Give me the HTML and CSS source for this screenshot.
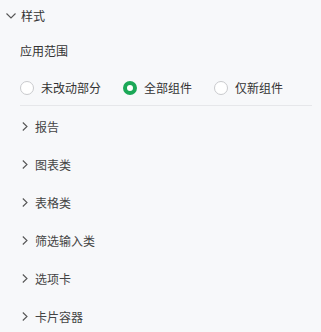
FILE: index.html
```html
<!DOCTYPE html>
<html lang="zh">
<head>
<meta charset="utf-8">
<link rel="stylesheet" href="styles.css">
</head>
<body>
<div class="panel">
  <div class="header">
    <svg class="chev-down" width="10" height="6" viewBox="0 0 10 6"><path d="M0.5 0.5 L5 5 L9.5 0.5" fill="none" stroke="#555" stroke-width="1.1"/></svg>
    <span class="header-text">样式</span>
  </div>
  <div class="body">
    <div class="label">应用范围</div>
    <div class="radios">
      <label class="radio"><span class="dot"></span><span class="rtext">未改动部分</span></label>
      <label class="radio checked"><span class="dot"></span><span class="rtext">全部组件</span></label>
      <label class="radio"><span class="dot"></span><span class="rtext">仅新组件</span></label>
    </div>
    <div class="divider"></div>
  </div>
  <div class="items">
    <div class="item"><svg class="chev-right" width="6" height="9" viewBox="0 0 6 9"><path d="M0.8 0.5 L5 4.5 L0.8 8.5" fill="none" stroke="#555" stroke-width="1.1"/></svg><span>报告</span></div>
    <div class="item"><svg class="chev-right" width="6" height="9" viewBox="0 0 6 9"><path d="M0.8 0.5 L5 4.5 L0.8 8.5" fill="none" stroke="#555" stroke-width="1.1"/></svg><span>图表类</span></div>
    <div class="item"><svg class="chev-right" width="6" height="9" viewBox="0 0 6 9"><path d="M0.8 0.5 L5 4.5 L0.8 8.5" fill="none" stroke="#555" stroke-width="1.1"/></svg><span>表格类</span></div>
    <div class="item"><svg class="chev-right" width="6" height="9" viewBox="0 0 6 9"><path d="M0.8 0.5 L5 4.5 L0.8 8.5" fill="none" stroke="#555" stroke-width="1.1"/></svg><span>筛选输入类</span></div>
    <div class="item"><svg class="chev-right" width="6" height="9" viewBox="0 0 6 9"><path d="M0.8 0.5 L5 4.5 L0.8 8.5" fill="none" stroke="#555" stroke-width="1.1"/></svg><span>选项卡</span></div>
    <div class="item"><svg class="chev-right" width="6" height="9" viewBox="0 0 6 9"><path d="M0.8 0.5 L5 4.5 L0.8 8.5" fill="none" stroke="#555" stroke-width="1.1"/></svg><span>卡片容器</span></div>
  </div>
</div>
</body>
</html>
```
FILE: styles.css
```css
html, body {
  margin: 0;
  padding: 0;
  background: #f7f8fa;
}
body {
  font-family: "Noto Sans CJK SC", "Noto Sans", sans-serif;
  font-size: 12px;
  color: #333;
  width: 321px;
  height: 332px;
  overflow: hidden;
}
.header {
  height: 32px;
  display: flex;
  align-items: center;
  padding-left: 6px;
  gap: 5px;
}
.header-text {
  color: #333;
  line-height: 18px;
}
.body {
  padding: 0 9px 0 20px;
}
.label {
  margin-top: 10px;
  line-height: 18px;
  color: #333;
}
.radios {
  margin-top: 18px;
  height: 20px;
  display: flex;
  align-items: center;
  gap: 22px;
}
.radio {
  display: flex;
  align-items: center;
  gap: 7px;
  color: #333;
}
.dot {
  box-sizing: border-box;
  width: 14px;
  height: 14px;
  border-radius: 50%;
  border: 1px solid #c9cacd;
  background: #fff;
}
.radio.checked .dot {
  border: 4px solid #1ba857;
}
.rtext {
  line-height: 18px;
}
.divider {
  margin-top: 7px;
  height: 1px;
  background: #e6e7ea;
}
.items {
  padding-top: 1px;
}
.item {
  height: 38px;
  display: flex;
  align-items: center;
  padding-left: 22px;
  gap: 7px;
  color: #444;
}
.chev-right {
  display: block;
}
```
